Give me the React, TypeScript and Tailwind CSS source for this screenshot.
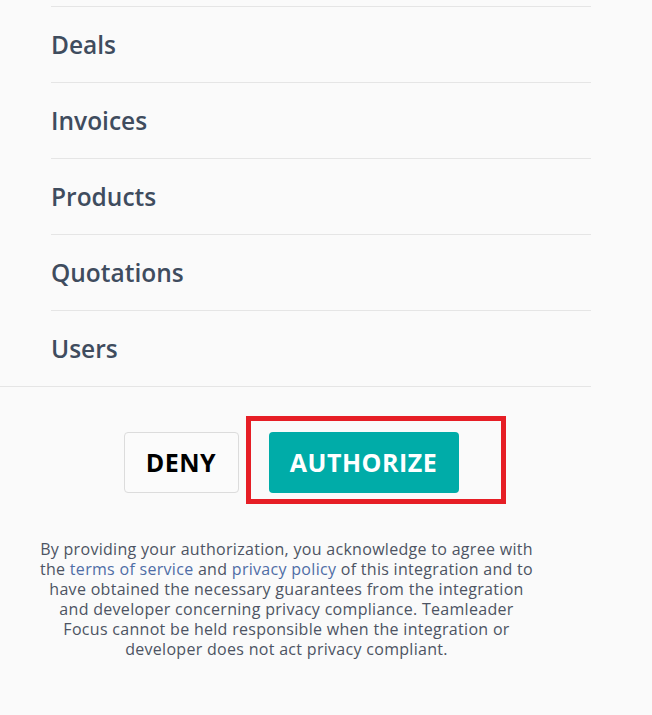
import React from "react";

const items = ["Deals", "Invoices", "Products", "Quotations", "Users"];

export default function App() {
  return (
    <div
      className="w-[652px] h-[715px] bg-[#fafafa] overflow-hidden"
      style={{ fontFamily: "'Open Sans', Lato, sans-serif" }}
    >
      <div className="w-[591px] pt-[6px] border-b border-[#e5e5e5]">
        {items.map((it) => (
          <div
            key={it}
            className="ml-[51px] h-[76px] pt-[2px] border-t border-[#e5e5e5] flex items-center"
          >
            <span className="text-[24.5px] font-semibold text-[#3f4c5e] leading-none">
              {it}
            </span>
          </div>
        ))}
      </div>

      <div className="w-[582px] mt-[45px] flex justify-center items-center gap-[30px]">
        <button className="w-[115px] h-[61px] rounded-[4px] border border-[#dcdcdc] bg-[#fbfbfb] text-[25px] tracking-[0.5px] font-bold text-black">
          DENY
        </button>
        <div className="relative">
          <button className="w-[190px] h-[61px] rounded-[4px] bg-[#00aca8] text-[25px] tracking-[0.5px] font-bold text-white">
            AUTHORIZE
          </button>
          <div className="absolute left-[-23px] top-[-16px] w-[260px] h-[88px] border-[5px] border-[#e61e25] pointer-events-none" />
        </div>
      </div>

      <p className="w-[573px] mt-[46px] text-center text-[16px] tracking-[0.3px] leading-[20px] text-[#4d5463]">
        By providing your authorization, you acknowledge to agree with
        <br />
        the <span className="text-[#4f6da6]">terms of service</span> and{" "}
        <span className="text-[#4f6da6]">privacy policy</span> of this integration and to
        <br />
        have obtained the necessary guarantees from the integration
        <br />
        and developer concerning privacy compliance. Teamleader
        <br />
        Focus cannot be held responsible when the integration or
        <br />
        developer does not act privacy compliant.
      </p>
    </div>
  );
}
